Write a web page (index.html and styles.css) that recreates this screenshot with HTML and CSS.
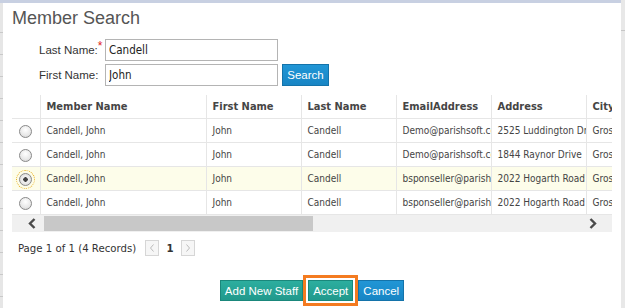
FILE: index.html
```html
<!DOCTYPE html>
<html>

<head>
    <meta name="viewport" content="width=device-width, initial-scale=1.0" />
    <title>Member Search</title>
    <link rel="stylesheet" href="styles.css">
</head>

<body>
    <div class="screen">
        <div class="window">
            <div class="edge-left"></div>
            <div class="dialog">
                <!-- TITLE -->
                <h1 class="title">Member Search</h1>

                <!-- SEARCH FORM -->
                <form class="search-form" onsubmit="return false">
                    <div class="form-row">
                        <label>Last Name:<span class="req">*</span></label>
                        <input class="field" value="Candell" />
                    </div>
                    <div class="form-row">
                        <label>First Name:</label>
                        <input class="field" value="John" />
                        <button class="btn btn-blue search-btn">Search</button>
                    </div>
                </form>

                <!-- RESULTS GRID -->
                <div class="grid">
                    <div class="grid-body">
                        <table class="results">
                            <colgroup>
                                <col class="col-radio">
                                <col class="col-name">
                                <col class="col-std">
                                <col class="col-std">
                                <col class="col-std">
                                <col class="col-std">
                                <col class="col-std">
                            </colgroup>
                            <thead>
                                <tr>
                                    <th></th>
                                    <th>Member Name</th>
                                    <th>First Name</th>
                                    <th>Last Name</th>
                                    <th>EmailAddress</th>
                                    <th>Address</th>
                                    <th>City</th>
                                </tr>
                            </thead>
                            <tbody>
                                <tr>
                                    <td><span class="radio"></span></td>
                                    <td>Candell, John</td>
                                    <td>John</td>
                                    <td>Candell</td>
                                    <td>Demo@parishsoft.com</td>
                                    <td>2525 Luddington Drive</td>
                                    <td>Grosse Pointe</td>
                                </tr>
                                <tr>
                                    <td><span class="radio"></span></td>
                                    <td>Candell, John</td>
                                    <td>John</td>
                                    <td>Candell</td>
                                    <td>Demo@parishsoft.com</td>
                                    <td>1844 Raynor Drive</td>
                                    <td>Grosse Pointe</td>
                                </tr>
                                <tr class="selected">
                                    <td><span class="radio checked"></span></td>
                                    <td>Candell, John</td>
                                    <td>John</td>
                                    <td>Candell</td>
                                    <td>bsponseller@parishsoft.com</td>
                                    <td>2022 Hogarth Road</td>
                                    <td>Grosse Pointe</td>
                                </tr>
                                <tr>
                                    <td><span class="radio"></span></td>
                                    <td>Candell, John</td>
                                    <td>John</td>
                                    <td>Candell</td>
                                    <td>bsponseller@parishsoft.com</td>
                                    <td>2022 Hogarth Road</td>
                                    <td>Grosse Pointe</td>
                                </tr>
                            </tbody>
                        </table>
                    </div>
                    <!-- horizontal scrollbar -->
                    <div class="hscroll">
                        <div class="hscroll-btn prev">
                            <svg width="10" height="11" viewBox="0 0 10 11"><polyline points="7.5,1 3,5.5 7.5,10" fill="none" stroke="#4a4a4a" stroke-width="2.4" /></svg>
                        </div>
                        <div class="hscroll-thumb"></div>
                        <div class="hscroll-track"></div>
                        <div class="hscroll-btn next">
                            <svg width="10" height="11" viewBox="0 0 10 11"><polyline points="2.5,1 7,5.5 2.5,10" fill="none" stroke="#4a4a4a" stroke-width="2.4" /></svg>
                        </div>
                    </div>
                </div>

                <!-- PAGER -->
                <div class="pager">
                    <span class="pager-info">Page 1 of 1 (4 Records)</span>
                    <span class="pager-btn">
                        <svg width="6" height="8" viewBox="0 0 6 8"><polyline points="4.5,0.5 1.5,4 4.5,7.5" fill="none" stroke="#bbb" stroke-width="1" /></svg>
                    </span>
                    <span class="pager-num">1</span>
                    <span class="pager-btn">
                        <svg width="6" height="8" viewBox="0 0 6 8"><polyline points="1.5,0.5 4.5,4 1.5,7.5" fill="none" stroke="#bbb" stroke-width="1" /></svg>
                    </span>
                </div>

                <!-- ACTIONS -->
                <div class="actions">
                    <button class="btn btn-teal">Add New Staff</button>
                    <button class="btn btn-teal focused">Accept</button>
                    <button class="btn btn-blue">Cancel</button>
                </div>
            </div>
        </div>
        <div class="edge-right"></div>
    </div>
</body>

</html>
```

FILE: styles.css
```css
body {
    margin: 0;
    background-color: #fff;
    font-family: "Liberation Sans", Arial, sans-serif;
    color: #333;
}

.screen {
    display: flex;
    width: 625px;
    height: 308px;
    overflow: hidden;
}

.window {
    display: flex;
    width: 621px;
    border-top: 3px solid #c8d0e2;
}

.edge-left {
    width: 3px;
    background-color: #e6e6e6;
    background-image: repeating-linear-gradient(to bottom, transparent 0, transparent 21px, #c9c9c9 21px, #c9c9c9 22px);
    background-position: 0 8px;
}

.edge-right {
    width: 4px;
    background: linear-gradient(to bottom, #e8e8e8 0, #e8e8e8 30px, #c6c6c6 30px, #c6c6c6 31px, #e8e8e8 31px);
}

.dialog {
    flex: 1;
    padding: 0 9px;
    background-color: #fff;
}

.title {
    margin: 4px 0 0;
    font-size: 18px;
    line-height: 22px;
    font-weight: normal;
    color: #555;
}

/* FORM */
.search-form {
    margin-top: 10px;
    padding-left: 27px;
    display: flex;
    flex-direction: column;
    gap: 3px;
}

.form-row {
    display: flex;
    align-items: center;
}

.form-row label {
    width: 66px;
    flex-shrink: 0;
    white-space: nowrap;
    font-size: 11.5px;
    color: #333;
}

.req {
    color: #e02020;
    font-size: 12px;
    vertical-align: 4px;
    line-height: 0;
}

.field {
    box-sizing: border-box;
    width: 173px;
    height: 22px;
    margin: 0;
    padding: 0 3px;
    border: 1px solid #b4b4b4;
    font-family: "DejaVu Sans Condensed", "DejaVu Sans", sans-serif;
    font-size: 11.5px;
    color: #222;
}

.btn {
    box-sizing: border-box;
    height: 21px;
    padding: 0 4px;
    font-family: "Liberation Sans", Arial, sans-serif;
    font-size: 11.5px;
    color: #fff;
    cursor: pointer;
}

.btn-blue {
    background: linear-gradient(to bottom, #2196d6, #1885c4);
    border: 1px solid #1473aa;
}

.btn-teal {
    background: linear-gradient(to bottom, #2cae9f, #21998c);
    border: 1px solid #1a877b;
}

.search-btn {
    margin-left: 4px;
    height: 22px;
    width: 47px;
}

/* GRID */
.grid {
    margin-top: 9px;
}

.grid-body {
    width: 600px;
    overflow: hidden;
}

.results {
    table-layout: fixed;
    width: 669px;
    border-collapse: collapse;
    font-family: "DejaVu Sans Condensed", "DejaVu Sans", sans-serif;
    font-size: 10px;
    color: #444;
}

.col-radio {
    width: 28px;
}

.col-name {
    width: 166px;
}

.col-std {
    width: 95px;
}

.results th,
.results td {
    height: 23px;
    padding: 0 0 0 6px;
    border-right: 1px solid #e6e6e6;
    border-bottom: 1px solid #e6e6e6;
    text-align: left;
    white-space: nowrap;
    overflow: hidden;
}

.results th {
    font-size: 11px;
    font-weight: bold;
    color: #454545;
}

.results td:first-child,
.results th:first-child {
    padding: 0;
    text-align: center;
}

.selected td {
    background-color: #fdfdea;
}

.radio {
    display: inline-block;
    box-sizing: border-box;
    width: 13px;
    height: 13px;
    margin-top: 2px;
    border: 1px solid #8a8a8a;
    border-radius: 50%;
    background: radial-gradient(circle at 50% 35%, #fff 0, #e8e8e8 60%, #cfcfcf 100%);
    vertical-align: middle;
}

.radio.checked {
    background: radial-gradient(circle, #444 0, #444 2px, #f2f2f2 2.5px, #d4d4d4 100%);
    outline: 1px dotted #e8b020;
    outline-offset: 2px;
}

.hscroll {
    display: flex;
    width: 600px;
    height: 17px;
    background-color: #f0f0f0;
}

.hscroll-btn {
    width: 32px;
    display: flex;
    align-items: center;
}

.hscroll-btn.prev {
    padding-left: 15px;
    box-sizing: border-box;
}

.hscroll-btn.next {
    padding-left: 8px;
    box-sizing: border-box;
}

.hscroll-thumb {
    width: 269px;
    margin: 1px 0;
    background-color: #c8c8c8;
}

.hscroll-track {
    flex: 1;
}

/* PAGER */
.pager {
    display: flex;
    align-items: center;
    height: 16px;
    margin-top: 8px;
    padding-left: 6px;
    font-family: "DejaVu Sans Condensed", "DejaVu Sans", sans-serif;
    font-size: 11.3px;
    color: #333;
}

.pager-info {
    margin-right: 9px;
}

.pager-btn {
    box-sizing: border-box;
    width: 14px;
    height: 16px;
    border: 1px solid #d6d6d6;
    background-color: #f6f6f6;
    display: flex;
    align-items: center;
    justify-content: center;
}

.pager-num {
    width: 22px;
    text-align: center;
    font-weight: bold;
}

/* ACTIONS */
.actions {
    display: flex;
    justify-content: center;
    gap: 5px;
    margin-top: 24px;
}

.focused {
    outline: 3px solid #f47b20;
    outline-offset: 2px;
}
```
